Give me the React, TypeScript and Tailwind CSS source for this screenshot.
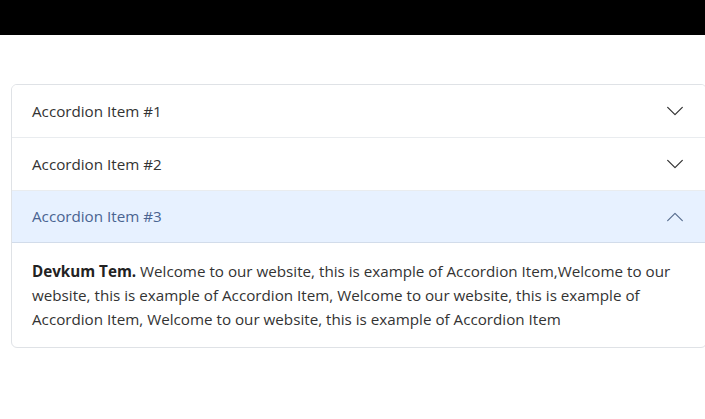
import { useState } from 'react';

const items = [
  { title: 'Accordion Item #1' },
  { title: 'Accordion Item #2' },
  { title: 'Accordion Item #3' },
];

function Chevron({ up }: { up: boolean }) {
  return (
    <svg width="18" height="18" viewBox="0 0 16 16" fill="none" className={up ? 'rotate-180' : ''}>
      <path d="M1.5 4.8L8 11.2L14.5 4.8" stroke="currentColor" strokeWidth="1.1" strokeLinecap="round" strokeLinejoin="round" />
    </svg>
  );
}

export default function App() {
  const [open, setOpen] = useState(2);

  return (
    <div className="min-h-screen bg-white overflow-hidden" style={{ fontFamily: '"Open Sans", "Noto Sans", sans-serif' }}>
      <div className="h-[35px] bg-black" />
      <div className="mt-[49px] ml-[11px] w-[696px] border border-[#dfe2e6] rounded-[6px] overflow-hidden">
        {items.map((item, i) => {
          const active = open === i;
          return (
            <div key={i} className={i > 0 ? 'border-t border-[#e9ecef]' : ''}>
              <button
                onClick={() => setOpen(active ? -1 : i)}
                className={`w-full flex items-center h-[52px] px-5 text-left text-[15.2px] ${
                  active ? 'bg-[#e7f1ff] text-[#4a6491] border-b border-[#d2dcea]' : 'bg-white text-[#333]'
                }`}
              >
                <span>{item.title}</span>
                <span className={`ml-auto mr-[2px] ${active ? 'text-[#5a6f90]' : 'text-[#333]'}`}>
                  <Chevron up={active} />
                </span>
              </button>
              {active && (
                <div className="px-5 pt-[16px] pb-[16px] text-[15.2px] leading-6 text-[#333]">
                  <strong className="font-bold text-[#222]">Devkum Tem.</strong> Welcome to our website, this is example of
                  Accordion Item,Welcome to our website, this is example of Accordion Item, Welcome to our website, this is
                  example of Accordion Item, Welcome to our website, this is example of Accordion Item
                </div>
              )}
            </div>
          );
        })}
      </div>
    </div>
  );
}
